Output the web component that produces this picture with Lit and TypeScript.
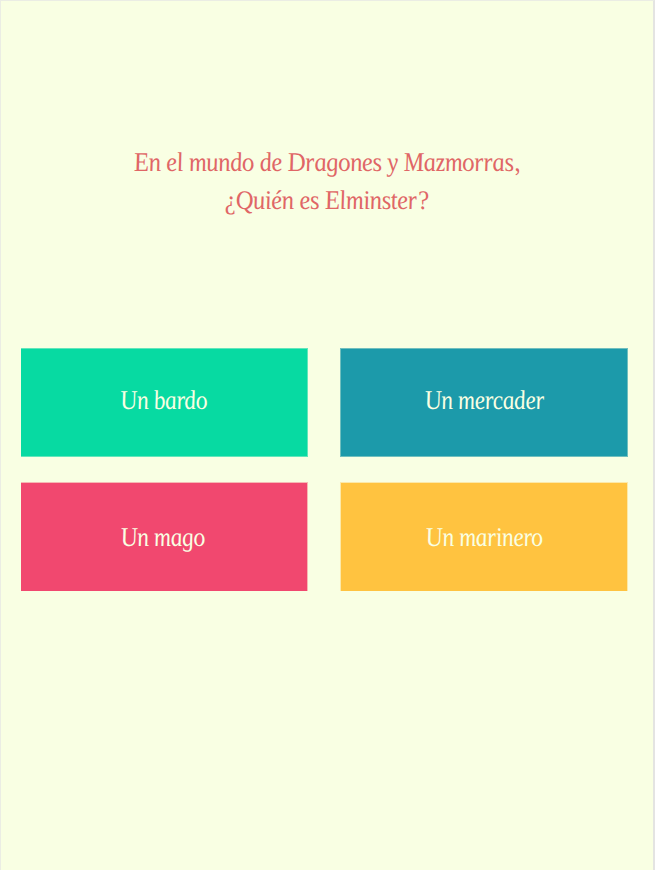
import { LitElement, html, css } from "lit";
import { customElement, state } from "lit/decorators.js";

@customElement("app-root")
export class AppRoot extends LitElement {
  @state() private answers = [
    { text: "Un bardo", tone: "green" },
    { text: "Un mercader", tone: "blue" },
    { text: "Un mago", tone: "pink" },
    { text: "Un marinero", tone: "yellow" },
  ];

  static styles = css`
    :host {
      display: block;
      box-sizing: border-box;
      height: 870px;
      overflow: hidden;
      background: #f9ffe3;
      border: solid #ebede4;
      border-width: 1px 2px 0 1px;
      border-right-color: #e4e4e2;
      font: italic 27px/37.5px "Liberation Serif", serif;
    }
    .question {
      margin: 0;
      padding: 143px 2px 0 0;
      height: 204px;
      color: #e06666;
      font: inherit;
      letter-spacing: -0.5px;
      text-align: center;
    }
    .line {
      display: block;
    }
    .ink {
      display: inline-block;
      white-space: nowrap;
      transform: scaleX(0.874) skewX(8deg);
    }
    .question .ink { transform: scaleX(0.916) skewX(8deg); }
    .answers {
      display: grid;
      grid-template-columns: 287px 288px;
      grid-template-rows: 109px 109px;
      column-gap: 32px;
      row-gap: 25px;
      padding-left: 20px;
    }
    .answer {
      box-sizing: border-box;
      display: flex;
      align-items: center;
      justify-content: center;
      padding: 0;
      border: 0 solid;
      border-radius: 0;
      color: #f9ffe3;
      font: inherit;
      letter-spacing: -0.5px;
      background: var(--fill);
      border-color: var(--edge);
    }
    .green { --fill: #07daa2; --edge: #62e6bb; border-width: 1px 1px 1px 0; }
    .blue { --fill: #1c9aaa; --edge: #70bfbe; border-width: 1px; }
    .pink { --fill: #f1486f; --edge: #f6b9b4; border-width: 1px 1px 0 0; }
    .yellow { --fill: #ffc340; --edge: #fce9a9; border-width: 1px 1px 0 1px; }
    .green .ink, .blue .ink { padding-bottom: 3px; }
    .pink .ink, .yellow .ink { padding-top: 2px; }
    .pink .ink { padding-right: 3px; }
  `;

  render() {
    return html`
      <h1 class="question">
        <span class="line"><span class="ink">En el mundo de Dragones y Mazmorras,</span></span>
        <span class="line"><span class="ink">¿Quién es Elminster?</span></span>
      </h1>
      <div class="answers">
        ${this.answers.map(
          (a) => html`<button class="answer ${a.tone}"><span class="ink">${a.text}</span></button>`
        )}
      </div>
    `;
  }
}
